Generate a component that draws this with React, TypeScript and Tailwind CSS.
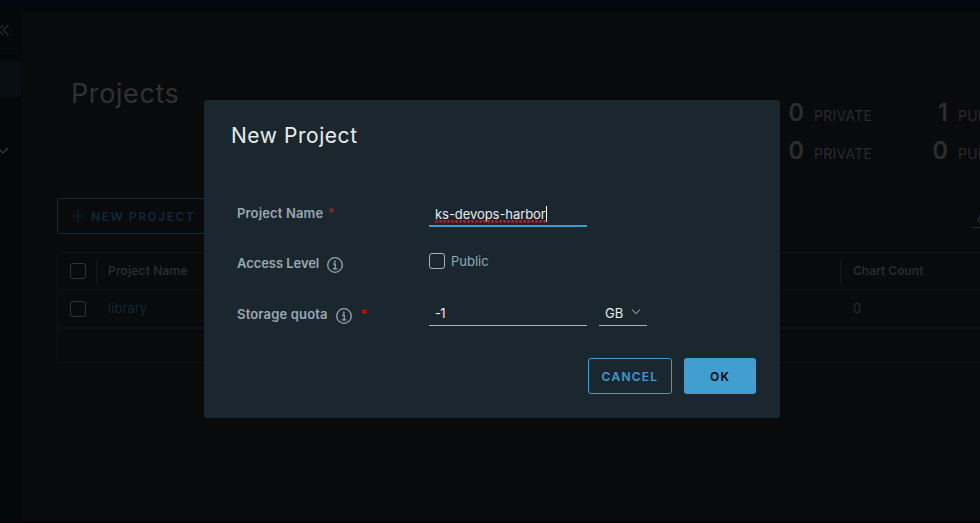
import type { ReactNode } from "react";

function InfoIcon() {
  return (
    <svg className="size-4 shrink-0" viewBox="0 0 16 16" fill="none" stroke="#9aa8b1" aria-hidden="true">
      <circle cx="8" cy="8" r="7.3" strokeWidth="1.3" />
      <circle cx="7.8" cy="4.5" r="1" fill="#9aa8b1" stroke="none" />
      <path d="M6.2 7h2v4.7M5.8 11.9h4.5" strokeWidth="1.3" />
    </svg>
  );
}

function Asterisk() {
  return (
    <svg className="size-[5px] shrink-0" viewBox="0 0 5 5" stroke="#c21d00" strokeWidth="1.1" aria-hidden="true">
      <path d="M2.5 0v5M.2 1.2l4.6 2.6M4.8 1.2L.2 3.8" />
    </svg>
  );
}

function Stat({ count, label, first }: { count: string; label: string; first?: boolean }) {
  return (
    <div className={first ? "flex h-9 w-[84px] items-baseline" : "ml-[60px] flex h-9 w-[84px] items-baseline"}>
      <span className="flex w-4 shrink-0 justify-end text-[24px] font-semibold text-[#2b2d2f]">{count}</span>
      <span className="ml-[10px] text-[14px] tracking-[0.25px] text-[#292b2d]">{label}</span>
    </div>
  );
}

function FormLabel({ children }: { children: ReactNode }) {
  return <span className="text-[13px] leading-4 font-semibold whitespace-nowrap text-[#9aa8b1]">{children}</span>;
}

function Page() {
  return (
    <div className="flex h-[523px] flex-col">
      <header className="h-3 shrink-0 bg-[#01070e]" />
      <div className="flex min-h-0 grow">
        <nav className="flex w-[22px] shrink-0 flex-col bg-[#040809]">
          <div className="flex h-[37px] items-center border-b border-[#070b0c]">
            <svg className="h-3 w-[9px]" viewBox="0 0 9 12" fill="none" stroke="#2c2f30" strokeWidth="1.1">
              <path d="M3.5 1l-5 5 5 5M8.3 1l-5 5 5 5" />
            </svg>
          </div>
          <div className="mt-3 h-9 w-[21px] rounded-r-[3px] bg-[#090e12]" />
          <svg className="mt-[50px] h-2 w-[9px]" viewBox="0 0 9 8" fill="none" stroke="#3b3d3e" strokeWidth="1.2">
            <path d="M-2 1l5 5 5-5" />
          </svg>
        </nav>
        <main className="min-w-0 grow overflow-hidden pl-[35px]">
          <div className="flex h-[186px]">
            <h1 className="mt-16 w-[731px] shrink-0 pl-[14px] text-[27px] leading-9 font-normal tracking-[0.6px] text-[#303233]">Projects</h1>
            <div className="mt-[83px] flex shrink-0 flex-col gap-[2px] leading-9">
              <div className="flex">
                <Stat count="0" label="PRIVATE" first />
                <Stat count="1" label="PUBLIC" />
              </div>
              <div className="flex">
                <Stat count="0" label="PRIVATE" first />
                <Stat count="0" label="PUBLIC" />
              </div>
            </div>
          </div>
          <div className="flex h-[54px]">
            <div className="flex h-9 w-[152px] shrink-0 items-center rounded-[3px] border border-[#102c3a] pl-[14px] text-[#10283a]">
              <svg className="size-3" viewBox="0 0 12 12" fill="none" stroke="#0c2833" strokeWidth="1.2">
                <path d="M6 0v12M0 6h12" />
              </svg>
              <span className="ml-[7px] pt-px text-[12px] font-semibold tracking-[1.55px] whitespace-nowrap">NEW PROJECT</span>
            </div>
            <div className="ml-[762px] h-[30px] w-[60px] shrink-0 border-b border-[#26292b] pt-[11px] pl-[6px] text-[13px] leading-4 whitespace-nowrap text-[#303335]">All Projects</div>
          </div>
          <div className="h-[111px] w-[960px] rounded-[3px] border border-[#101315] text-[13px] text-[#292c2f]">
            <div className="flex h-[37px] items-center border-b border-[#101315] font-semibold">
              <span className="ml-3 size-4 rounded-[3px] border border-[#303335]" />
              <span className="ml-[10px] h-[25px] w-px bg-[#121619]" />
              <span className="ml-[11px] w-[732px] text-[12px] tracking-[0.15px]">Project Name</span>
              <span className="h-[25px] w-px bg-[#121619]" />
              <span className="ml-3 text-[12px]">Chart Count</span>
            </div>
            <div className="flex h-[39px] items-center border-b-2 border-[#101315]">
              <span className="ml-3 size-4 rounded-[3px] border border-[#303335]" />
              <span className="ml-[22px] w-[745px] pt-px tracking-[0.05px] text-[#0e2938]">library</span>
              <span>0</span>
            </div>
          </div>
        </main>
      </div>
      <div className="h-[2px] shrink-0 bg-[#040206]" />
    </div>
  );
}

function ProjectDialog() {
  return (
    <section className="absolute top-[100px] left-[204px] flex h-[318px] w-[576px] flex-col rounded-[3px] bg-[#1b272e] text-[#e9edf0]">
      <h2 className="mt-[21px] ml-[27px] text-[21px] leading-[30px] font-normal tracking-[0.55px]">New Project</h2>
      <div className="mt-[49px] flex h-[50px] pl-[33px]">
        <div className="flex w-[192px] pt-[5px] tracking-[0.15px]">
          <FormLabel>Project Name</FormLabel>
          <span className="ml-[6px] pt-[3px]"><Asterisk /></span>
        </div>
        <div className="flex h-[27px] w-[158px] items-start border-b-2 border-[#3d9dd0] pt-[6px] pl-[6px]">
          <span className="relative text-[13px] leading-4 tracking-[-0.06px] whitespace-nowrap">
            ks-devops-harbor
            <svg className="absolute top-[14px] left-0 h-[3px] w-[111px]" viewBox="0 0 111 3" aria-hidden="true">
              <path d="M1.5 1.5H110" stroke="#b91f25" strokeWidth="2.8" strokeLinecap="round" strokeDasharray="0.1 3.9" />
            </svg>
          </span>
          <span className="h-4 w-px bg-white" />
        </div>
      </div>
      <div className="flex h-[50px] pl-[33px]">
        <div className="flex w-[192px] pt-[5px] tracking-[-0.06px]">
          <FormLabel>Access Level</FormLabel>
          <span className="ml-2 pt-[2px]"><InfoIcon /></span>
        </div>
        <span className="mt-[3px] size-4 rounded-[3px] border border-[#a5b2bb]" />
        <span className="mt-[3px] ml-[6px] text-[13px] leading-4 text-[#9aa8b1]">Public</span>
      </div>
      <div className="flex h-[59px] pl-[33px]">
        <div className="flex w-[192px] pt-[6px] tracking-[0.17px]">
          <FormLabel>Storage quota</FormLabel>
          <span className="ml-2 pt-[2px]"><InfoIcon /></span>
          <span className="ml-[10px] pt-[3px]"><Asterisk /></span>
        </div>
        <div className="h-[26px] w-[158px] border-b border-[#a5b2bb] pt-[5px] pl-[6px] text-[13px] leading-4 tracking-[-0.8px]">-1</div>
        <div className="ml-3 flex h-[26px] w-12 border-b border-[#a5b2bb] pt-[5px] pl-[6px] text-[13px] leading-4">
          <span className="w-[26px]">GB</span>
          <svg className="mt-1 h-[6px] w-[10px]" viewBox="0 0 10 6" fill="none" stroke="#7d8a92" strokeWidth="1.2">
            <path d="M1 .7l4 4 4-4" />
          </svg>
        </div>
      </div>
      <div className="-mt-px flex justify-end gap-3 pr-6 text-[12px] font-semibold">
        <button className="h-9 w-[84px] rounded-[3px] border border-[#3d9dd0] pt-[2px] tracking-[1.25px] text-[#3d9dd0]">CANCEL</button>
        <button className="h-9 w-[72px] rounded-[3px] bg-[#409ed1] pt-[2px] tracking-[1.2px] text-black">OK</button>
      </div>
    </section>
  );
}

export default function App() {
  return (
    <div className="relative h-[523px] w-[980px] overflow-hidden bg-[#080a0c] font-['Inter',sans-serif]">
      <Page />
      <ProjectDialog />
    </div>
  );
}
